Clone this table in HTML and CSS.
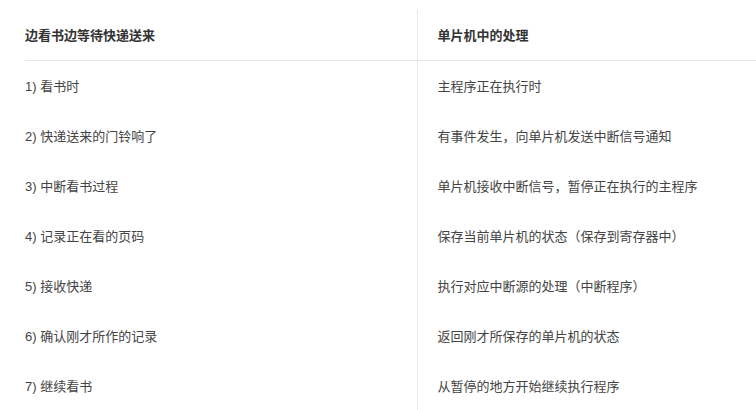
FILE: index.html
```html
<!DOCTYPE html>
<html lang="zh-CN">
<head>
  <meta charset="UTF-8" />
  <meta name="viewport" content="width=device-width, initial-scale=1" />
  <title>中断处理类比</title>
  <link rel="stylesheet" href="styles.css">
</head>
<body>
  <div class="wrap">
    <table class="compare">
      <thead>
        <tr><th>边看书边等待快递送来</th><th>单片机中的处理</th></tr>
      </thead>
      <tbody>
        <tr><td>1) 看书时</td><td>主程序正在执行时</td></tr>
        <tr><td>2) 快递送来的门铃响了</td><td>有事件发生，向单片机发送中断信号通知</td></tr>
        <tr><td>3) 中断看书过程</td><td>单片机接收中断信号，暂停正在执行的主程序</td></tr>
        <tr><td>4) 记录正在看的页码</td><td>保存当前单片机的状态（保存到寄存器中）</td></tr>
        <tr><td>5) 接收快递</td><td>执行对应中断源的处理（中断程序）</td></tr>
        <tr><td>6) 确认刚才所作的记录</td><td>返回刚才所保存的单片机的状态</td></tr>
        <tr><td>7) 继续看书</td><td>从暂停的地方开始继续执行程序</td></tr>
      </tbody>
    </table>
  </div>
</body>
</html>
```

FILE: styles.css
```css
body {
  margin: 0;
  background: #fff;
  font-family: "Liberation Sans", "Noto Sans CJK SC", sans-serif;
  font-size: 13px;
  color: #444;
  overflow: hidden;
}
.wrap {
  padding: 10px 0 0 25px;
}
.compare {
  border-collapse: collapse;
  width: 100%;
  table-layout: fixed;
}
.compare th,
.compare td {
  height: 50px;
  padding: 0 0 0 20px;
  text-align: left;
  vertical-align: middle;
  box-sizing: border-box;
}
.compare th:first-child,
.compare td:first-child {
  width: 392px;
  padding-left: 0;
  border-right: 1px solid #e8e8e8;
}
.compare th {
  font-weight: bold;
  color: #333;
  border-bottom: 1px solid #e8e8e8;
}
```
